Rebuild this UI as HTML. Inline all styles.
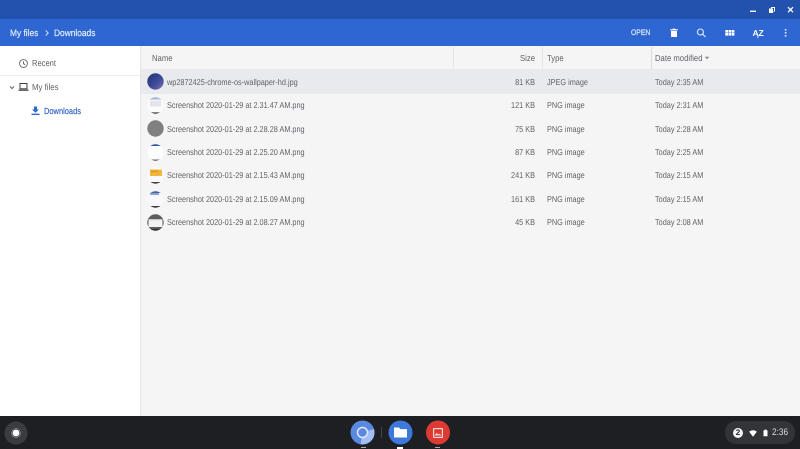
<!DOCTYPE html>
<html><head><meta charset="utf-8"><style>
html,body{margin:0;padding:0;width:800px;height:449px;overflow:hidden;background:#f5f5f5;font-family:"Liberation Sans",sans-serif}
#w{position:absolute;left:0;top:0;width:800px;height:449px;filter:blur(.3px);text-rendering:geometricPrecision}
.a{position:absolute;white-space:nowrap}
.t{font-size:8.5px;color:#5f6368;line-height:12px;transform:scaleX(.859);transform-origin:left center}
.r{text-align:right;transform-origin:right center}
.h{font-size:8.8px;transform:scaleX(.875)}
.c{font-size:9.3px;line-height:12px;color:#e4edfc;-webkit-text-stroke:.2px #e4edfc;transform:scaleX(.9);transform-origin:left center}
svg{position:absolute;overflow:hidden}
</style></head><body><div id="w">
<div class="a" style="left:0;top:0;width:800px;height:19px;background:#2351ae"></div>
<div class="a" style="left:0;top:19px;width:800px;height:27px;background:#2e66d2"></div>
<div class="a c" style="left:10px;top:26.5px">My files</div>
<svg style="left:43.5px;top:29px" width="6" height="8" viewBox="0 0 6 8"><path d="M1.7 1.5L4.2 4L1.7 6.5" fill="none" stroke="#d5e2fa" stroke-width="1"/></svg>
<div class="a c" style="left:54px;top:26.5px">Downloads</div>
<!-- window controls -->
<svg style="left:745px;top:3px" width="50" height="14" viewBox="0 0 50 14" fill="#fff"><rect x="5" y="7.6" width="6" height="1.4"/><path d="M26 4h4v4.5h-2V10h-4V5.500h2zM27 5v.6h1V8h1V5z" fill-rule="evenodd"/><path d="M43 4.200L48 9.200M48 4.200L43 9.200" stroke="#fff" stroke-width="1.300" fill="none"/></svg>
<div class="a" style="left:631px;top:27px;font-size:8px;line-height:12px;color:#dce8fb;-webkit-text-stroke:.2px #dce8fb;transform:scaleX(.85);transform-origin:left center">OPEN</div>
<svg style="left:669px;top:27px" width="10" height="11" viewBox="0 0 10 11" fill="#fff"><path d="M2 4h6v6H2zM1.200 2.200h2.300L4 1.600h2l.5.6h2.300v1.200H1.200z"/></svg>
<svg style="left:696px;top:27px" width="11" height="11" viewBox="0 0 11 11" fill="none" stroke="#e3ecfc" stroke-width="1.100"><circle cx="4.400" cy="5" r="3"/><path d="M6.600 7.200L9.500 10"/></svg>
<svg style="left:725px;top:29px" width="10" height="8" viewBox="0 0 10 8" fill="#fff"><path d="M.3 1h2.700v2.600H.3zM3.500 1h2.700v2.600H3.500zM6.700 1h2.700v2.600H6.700zM.3 4h2.700v2.600H.3zM3.500 4h2.700v2.600H3.500zM6.700 4h2.700v2.600H6.700z"/></svg>
<div class="a" style="left:752.500px;top:27.500px;font-size:8.600px;line-height:11px;color:#fff;font-weight:bold;letter-spacing:-.2px">AZ</div>
<svg style="left:752px;top:36px" width="12" height="3" viewBox="0 0 12 3"><path d="M4.500.5h2.500L5.800 2.200z" fill="#dce8fb"/></svg>
<svg style="left:783px;top:27px" width="5" height="11" viewBox="0 0 5 11" fill="#e8effc"><rect x="1.800" y="2" width="1.600" height="1.600"/><rect x="1.800" y="5" width="1.600" height="1.600"/><rect x="1.800" y="8" width="1.600" height="1.600"/></svg>
<!-- sidebar -->
<div class="a" style="left:0;top:46px;width:140px;height:370px;background:#fff;border-right:1px solid #e4e4e4"></div>
<svg style="left:18px;top:58px" width="11" height="11" viewBox="0 0 11 11" fill="none" stroke="#5f6368" stroke-width=".9"><circle cx="5.500" cy="5.500" r="3.900"/><path d="M5.500 3.200v2.500l1.700 1"/></svg>
<div class="a t" style="left:32px;top:57px;font-size:8.800px;transform:scaleX(.86)">Recent</div>
<div class="a" style="left:0;top:75px;width:140px;height:1px;background:#eeeeee"></div>
<svg style="left:8.500px;top:84.500px" width="7" height="6" viewBox="0 0 7 6"><path d="M1 1.500L3 3.500L5 1.500" fill="none" stroke="#5f6368" stroke-width="1"/></svg>
<svg style="left:18px;top:82px" width="11" height="10" viewBox="0 0 11 10" fill="none"><rect x="2" y="1.500" width="7" height="5.300" stroke="#3c4043" stroke-width="1"/><rect x=".5" y="7.600" width="10" height="1.200" fill="#3c4043"/></svg>
<div class="a t" style="left:32px;top:81px;font-size:8.800px;transform:scaleX(.89)">My files</div>
<svg style="left:30px;top:105px" width="11" height="11" viewBox="0 0 11 11" fill="#2f66d1"><path d="M4 1.500h3v3h2L5.500 7.800 2 4.500h2zM1.500 8.600h8v1.400h-8z"/></svg>
<div class="a" style="left:44px;top:105px;font-size:8.800px;line-height:12px;color:#3367c9;-webkit-text-stroke:.2px #3367c9;transform:scaleX(.85);transform-origin:left center">Downloads</div>
<!-- header -->
<div class="a" style="left:141px;top:46px;width:659px;height:23px;background:#f5f5f5"></div>
<div class="a t h" style="left:152px;top:52px">Name</div>
<div class="a t r h" style="left:480px;top:52px;width:55px;transform-origin:right center">Size</div>
<div class="a t h" style="left:547px;top:52px">Type</div>
<div class="a t h" style="left:655px;top:52px">Date modified</div>
<svg style="left:704px;top:56px" width="6" height="4" viewBox="0 0 6 4"><path d="M.8.8h4.400L3 3.200z" fill="#80868b"/></svg>
<div class="a" style="left:452.500px;top:47px;width:1px;height:22px;background:#e6e6e6"></div>
<div class="a" style="left:541.500px;top:47px;width:1px;height:22px;background:#e6e6e6"></div>
<div class="a" style="left:650.500px;top:47px;width:1px;height:22px;background:#dcdcdc"></div>
<!-- selected row -->
<div class="a" style="left:141px;top:69px;width:659px;height:24.500px;background:#e8eaed"></div>
<!-- thumbnails -->
<svg style="left:147px;top:73px" width="17" height="17" viewBox="0 0 17 17"><defs><linearGradient id="g1" x1="0" y1="0" x2="1" y2="1"><stop offset="0" stop-color="#1f3270"/><stop offset=".6" stop-color="#3f4d9c"/><stop offset="1" stop-color="#8d6fb0"/></linearGradient><clipPath id="c"><circle cx="8.500" cy="8.500" r="8.200"/></clipPath></defs><circle cx="8.500" cy="8.500" r="8.200" fill="url(#g1)"/></svg>
<svg style="left:147px;top:97px" width="17" height="17" viewBox="0 0 17 17"><g clip-path="url(#c)"><rect width="17" height="17" fill="#fbfbfb"/><rect width="17" height="2.500" fill="#a6b4dd"/><rect x="3" y="3.500" width="11" height="6" fill="#e6e4ea"/><rect y="15.400" width="17" height="2" fill="#333"/></g></svg>
<svg style="left:147px;top:120px" width="17" height="17" viewBox="0 0 17 17"><circle cx="8.500" cy="8.500" r="8.200" fill="#808080"/></svg>
<svg style="left:147px;top:144px" width="17" height="17" viewBox="0 0 17 17"><g clip-path="url(#c)"><rect width="17" height="17" fill="#fdfdfd"/><rect width="17" height="2" fill="#2c559f"/><rect y="15.600" width="17" height="2" fill="#444"/></g></svg>
<svg style="left:147px;top:167px" width="17" height="17" viewBox="0 0 17 17"><g clip-path="url(#c)"><rect width="17" height="17" fill="#fafafa"/><rect x="3" y="2.500" width="12" height="6.500" fill="#f0b73c"/><rect x="4" y="3.500" width="7" height="2" fill="#e79b25"/><rect y="15" width="17" height="2" fill="#444"/></g></svg>
<svg style="left:147px;top:191px" width="17" height="17" viewBox="0 0 17 17"><g clip-path="url(#c)"><rect width="17" height="17" fill="#f8f8fa"/><rect width="17" height="2" fill="#3f64ad"/><rect x="3" y="2" width="9" height="2" fill="#8c9fce"/><rect y="15" width="17" height="2" fill="#3c3c3c"/></g></svg>
<svg style="left:147px;top:214px" width="17" height="17" viewBox="0 0 17 17"><g clip-path="url(#c)"><rect width="17" height="17" fill="#5c5c5c"/><rect x="1.500" y="5" width="14" height="8" fill="#f4f4f4"/><rect x="1.500" y="5" width="14" height="1.200" fill="#c8c8c8"/><rect y="15" width="17" height="2" fill="#333"/></g></svg>
<!-- rows -->
<div class="a t" style="left:167px;top:76px">wp2872425-chrome-os-wallpaper-hd.jpg</div>
<div class="a t r" style="left:480px;top:76px;width:55px">81 KB</div><div class="a t" style="left:547px;top:76px">JPEG image</div><div class="a t" style="left:655px;top:76px">Today 2:35 AM</div>
<div class="a t" style="left:167px;top:99px">Screenshot 2020-01-29 at 2.31.47 AM.png</div>
<div class="a t r" style="left:480px;top:99px;width:55px">121 KB</div><div class="a t" style="left:547px;top:99px">PNG image</div><div class="a t" style="left:655px;top:99px">Today 2:31 AM</div>
<div class="a t" style="left:167px;top:123px">Screenshot 2020-01-29 at 2.28.28 AM.png</div>
<div class="a t r" style="left:480px;top:123px;width:55px">75 KB</div><div class="a t" style="left:547px;top:123px">PNG image</div><div class="a t" style="left:655px;top:123px">Today 2:28 AM</div>
<div class="a t" style="left:167px;top:146px">Screenshot 2020-01-29 at 2.25.20 AM.png</div>
<div class="a t r" style="left:480px;top:146px;width:55px">87 KB</div><div class="a t" style="left:547px;top:146px">PNG image</div><div class="a t" style="left:655px;top:146px">Today 2:25 AM</div>
<div class="a t" style="left:167px;top:169px">Screenshot 2020-01-29 at 2.15.43 AM.png</div>
<div class="a t r" style="left:480px;top:169px;width:55px">241 KB</div><div class="a t" style="left:547px;top:169px">PNG image</div><div class="a t" style="left:655px;top:169px">Today 2:15 AM</div>
<div class="a t" style="left:167px;top:193px">Screenshot 2020-01-29 at 2.15.09 AM.png</div>
<div class="a t r" style="left:480px;top:193px;width:55px">161 KB</div><div class="a t" style="left:547px;top:193px">PNG image</div><div class="a t" style="left:655px;top:193px">Today 2:15 AM</div>
<div class="a t" style="left:167px;top:216px">Screenshot 2020-01-29 at 2.08.27 AM.png</div>
<div class="a t r" style="left:480px;top:216px;width:55px">45 KB</div><div class="a t" style="left:547px;top:216px">PNG image</div><div class="a t" style="left:655px;top:216px">Today 2:08 AM</div>
<!-- shelf -->
<div class="a" style="left:0;top:416px;width:800px;height:33px;background:#1d1f23"></div>
<svg style="left:4px;top:420.500px" width="24" height="24" viewBox="0 0 24 24"><circle cx="12" cy="12" r="11.500" fill="#3a3c40"/><circle cx="12" cy="12" r="3.400" fill="#fff"/><circle cx="12" cy="12" r="4.400" fill="none" stroke="#8a8a8a" stroke-width=".8"/></svg>
<svg style="left:350px;top:420px" width="25" height="25" viewBox="0 0 25 25"><circle cx="12.500" cy="12.500" r="12" fill="#5c89e0"/><path d="M12.500 12.500L24 9A12 12 0 0 1 10.500 24.300Z" fill="#a3bef0"/><circle cx="12.500" cy="12.500" r="5" fill="#5c89e0" stroke="#dfe9fb" stroke-width="1.500"/></svg>
<div class="a" style="left:381px;top:427px;width:1px;height:11px;background:#44464a"></div>
<svg style="left:387.500px;top:420px" width="25" height="25" viewBox="0 0 25 25"><circle cx="12.500" cy="12.500" r="12" fill="#3d78db"/><path d="M6 7.500h5l1.500 1.600H19v8.400H6z" fill="#fff"/></svg>
<svg style="left:425.500px;top:420px" width="25" height="25" viewBox="0 0 25 25"><circle cx="12" cy="12.500" r="12" fill="#dc3a33"/><rect x="7" y="8" width="10" height="10" rx="1" fill="#f6d8d6"/><rect x="8.200" y="9.200" width="7.600" height="7.600" fill="#dc3a33"/><path d="M8.500 15.500l2.300-2.600 1.700 1.700 1.200-1 1.700 1.900z" fill="#f6d8d6"/></svg>
<div class="a" style="left:361px;top:446.500px;width:5px;height:1px;background:#aaa"></div>
<div class="a" style="left:397px;top:446.500px;width:6px;height:2px;background:#fff"></div>
<div class="a" style="left:435px;top:446.500px;width:5px;height:1px;background:#aaa"></div>
<div class="a" style="left:725px;top:421px;width:70px;height:22.500px;border-radius:11px;background:#323438"></div>
<div class="a" style="left:733px;top:427.500px;width:10px;height:10px;border-radius:50%;background:#f4f4f4;color:#222;font-size:8px;font-weight:bold;line-height:10px;text-align:center">2</div>
<svg style="left:749px;top:429.500px" width="8" height="7" viewBox="0 0 8 7"><path d="M.2 1.700C2.500-.2 5.500-.2 7.800 1.700L4 6.800z" fill="#fff"/></svg>
<svg style="left:763px;top:429px" width="5" height="8" viewBox="0 0 5 8"><path d="M1.500.6h2v.8h1V7.200H.5V1.400h1z" fill="#fff"/></svg>
<div class="a" style="left:772px;top:426.500px;font-size:9.500px;line-height:12px;color:#dadce0;transform:scaleX(.87);transform-origin:left center">2:36</div>
</div></body></html>
